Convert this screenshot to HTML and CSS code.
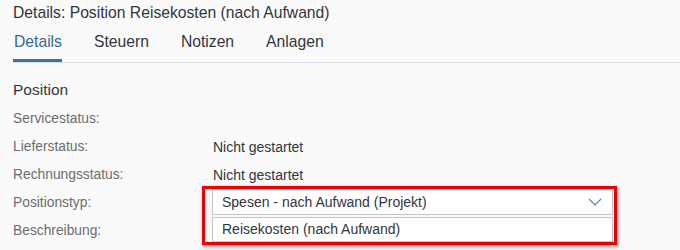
FILE: index.html
```html
<!DOCTYPE html>
<html lang="de">
<head>
<meta charset="utf-8">
<title>Details: Position Reisekosten (nach Aufwand)</title>
<link rel="stylesheet" href="styles.css">
</head>
<body>
<header class="header">
  <h1 class="title">Details: Position Reisekosten (nach Aufwand)</h1>
  <nav class="tabs">
    <span class="tab tab-active">Details</span>
    <span class="tab">Steuern</span>
    <span class="tab">Notizen</span>
    <span class="tab">Anlagen</span>
  </nav>
</header>
<section class="section">
  <h2 class="section-title">Position</h2>
  <div class="form">
    <div class="label">Servicestatus:</div>
    <div class="value"></div>
    <div class="label">Lieferstatus:</div>
    <div class="value">Nicht gestartet</div>
    <div class="label">Rechnungsstatus:</div>
    <div class="value">Nicht gestartet</div>
    <div class="label">Positionstyp:</div>
    <div class="value">
      <div class="select-wrap">
        <div class="select">
          <span class="select-text">Spesen - nach Aufwand (Projekt)</span>
          <svg class="chevron" width="14" height="8" viewBox="0 0 14 8"><polyline points="1,1 7,7 13,1" fill="none" stroke="#5b7fa8" stroke-width="1.2"/></svg>
        </div>
        <div class="popup">Reisekosten (nach Aufwand)</div>
        <div class="highlight"></div>
      </div>
    </div>
    <div class="label">Beschreibung:</div>
    <div class="value">
      <div class="textarea"></div>
    </div>
  </div>
</section>
</body>
</html>
```

FILE: styles.css
```css
html, body {
  margin: 0;
  padding: 0;
}
body {
  background: #fafafa;
  font-family: "Liberation Sans", Arial, sans-serif;
  color: #32363a;
  width: 680px;
  height: 250px;
  overflow: hidden;
}
.header {
  margin-left: 13px;
  padding-top: 3px;
  border-bottom: 1px solid #d9e0ea;
}
.title {
  margin: 0;
  font-size: 15.7px;
  font-weight: normal;
  line-height: 20px;
  color: #32363a;
}
.tabs {
  display: flex;
  gap: 32px;
  padding-top: 9px;
  padding-left: 1px;
}
.tab {
  font-size: 15.7px;
  line-height: 20px;
  padding-bottom: 7px;
  border-bottom: 3px solid transparent;
  color: #32363a;
}
.tab-active {
  color: #3a6792;
  border-bottom-color: #3f6f9a;
  margin-left: -1px;
  padding-left: 1px;
}
.section {
  padding-left: 13px;
  padding-top: 17px;
}
.section-title {
  margin: 0 0 5px 0;
  font-size: 15.5px;
  font-weight: normal;
  line-height: 20px;
  color: #32363a;
}
.form {
  display: grid;
  grid-template-columns: 200px 1fr;
  grid-template-rows: repeat(4, 28px) 27px;
}
.label {
  font-size: 13.8px;
  line-height: 28px;
  color: #6a6d70;
}
.value {
  font-size: 14px;
  line-height: 28px;
  color: #32363a;
}
.select-wrap {
  position: relative;
  width: 401px;
  margin-left: -1px;
}
.select {
  box-sizing: border-box;
  height: 26px;
  border: 1px solid #c4c4c4;
  background: #ffffff;
  display: flex;
  align-items: center;
  justify-content: space-between;
  padding: 0 10px 0 9px;
}
.select-text {
  line-height: 24px;
}
.chevron {
  display: block;
}
.popup {
  position: absolute;
  left: 0;
  top: 28px;
  box-sizing: border-box;
  width: 401px;
  height: 25px;
  border: 1px solid #c4c4c4;
  background: #ffffff;
  padding-left: 9px;
  line-height: 23px;
  z-index: 2;
}
.highlight {
  position: absolute;
  left: -10px;
  top: -3px;
  width: 415px;
  height: 59px;
  box-sizing: border-box;
  border: 3px solid #ee0000;
  box-shadow: 1px 2px 4px rgba(0, 0, 0, 0.35);
  z-index: 3;
}
.textarea {
  box-sizing: border-box;
  margin-left: -1px;
  width: 241px;
  height: 27px;
  border: 1px solid #c4c4c4;
  border-bottom: none;
  background: #ffffff;
}
```
